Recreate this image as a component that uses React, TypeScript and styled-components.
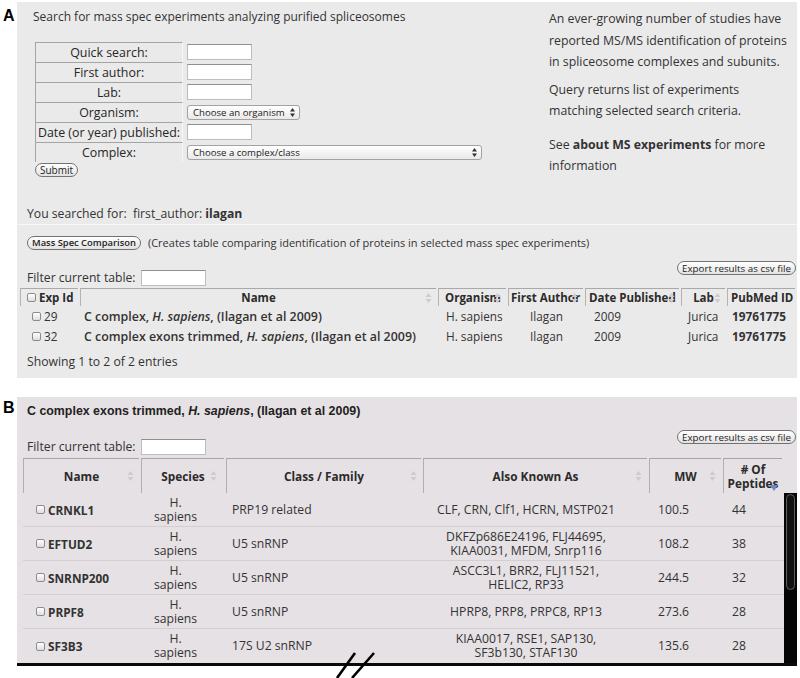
import React from 'react';
import styled, { createGlobalStyle } from 'styled-components';

const GlobalStyle = createGlobalStyle`
  html, body {
    margin: 0;
    padding: 0;
    background: #ffffff;
  }
  body {
    font-family: "Open Sans", "Noto Sans", "Liberation Sans", sans-serif;
    color: #333;
  }
`;

const Page = styled.div`
  position: relative;
  width: 800px;
  height: 678px;
  padding-top: 2px;
  box-sizing: border-box;
  overflow: hidden;
  background: #fff;
`;

const Figure = styled.section<{ $top?: number }>`
  display: grid;
  grid-template-columns: 17px 780px;
  margin-top: ${(p) => p.$top ?? 0}px;
`;

const Letter = styled.div<{ $pad: number }>`
  padding: ${(p) => p.$pad}px 0 0 3px;
  font: bold 16px/16px "Liberation Sans", Arial, sans-serif;
  color: #000;
`;

const Panel = styled.div<{ $bg: string; $pb?: number; $rule?: boolean }>`
  display: flex;
  flex-direction: column;
  background: ${(p) => p.$bg};
  padding-bottom: ${(p) => p.$pb ?? 0}px;
  border-bottom: ${(p) => (p.$rule ? '3px solid #0a0a0a' : 'none')};
`;

/* ---------- panel A: search form ---------- */

const TopRow = styled.div`
  display: grid;
  grid-template-columns: 532px 1fr;
  height: 175px;
`;

const SearchBlock = styled.div`
  padding: 7px 0 0 16px;
`;

const Heading = styled.h1`
  margin: 0;
  font-size: 12px;
  line-height: 16px;
  font-weight: normal;
  color: #333;
`;

const FieldGrid = styled.div`
  display: grid;
  grid-template-columns: 148px auto;
  grid-auto-rows: 20px;
  column-gap: 4px;
  justify-content: start;
  margin: 17px 0 0 2px;
`;

const FieldLabel = styled.div`
  display: flex;
  align-items: center;
  justify-content: center;
  border-top: 1px solid #a4a4a4;
  border-left: 1px solid #a4a4a4;
  border-right: 1px solid #f7f7f7;
  font-size: 12.4px;
  color: #262626;
  white-space: nowrap;
`;

const FieldCell = styled.div`
  display: flex;
  align-items: center;
`;

const TextInput = styled.input<{ $w?: number }>`
  width: ${(p) => p.$w ?? 65}px;
  height: 16px;
  box-sizing: border-box;
  margin: 0;
  padding: 0;
  background: #fff;
  border: 1px solid #bdbdbd;
  border-top-color: #8f8f8f;
`;

const Popup = styled.div<{ $w: number }>`
  width: ${(p) => p.$w}px;
  height: 15px;
  box-sizing: border-box;
  display: flex;
  align-items: center;
  justify-content: space-between;
  padding: 0 4px 0 5px;
  border: 1px solid #a2a2a2;
  border-radius: 3px;
  background: linear-gradient(#ffffff, #e9e9e9);
  font-size: 9.6px;
  color: #222;
  white-space: nowrap;
`;

const PillButton = styled.button<{ $fs: number; $fw?: number }>`
  height: 14px;
  padding: 0 4px;
  box-sizing: border-box;
  border: 1px solid #727272;
  border-radius: 7px;
  background: linear-gradient(#ffffff, #e2e2e2);
  font-family: inherit;
  font-size: ${(p) => p.$fs}px;
  font-weight: ${(p) => p.$fw ?? 400};
  line-height: 11px;
  color: #1c1c1c;
  white-space: nowrap;
`;

const SubmitButton = styled(PillButton)`
  display: block;
  margin: 1px 0 0 2px;
`;

const Info = styled.div`
  padding-top: 6px;
  font-size: 12.3px;
  line-height: 21.5px;
  color: #333;
`;

const InfoPara = styled.p<{ $mt?: number }>`
  margin: ${(p) => p.$mt ?? 0}px 0 0;
`;

const Strong = styled.b`
  font-weight: 700;
  color: #333;
`;

/* ---------- panel A: results ---------- */

const SearchSummary = styled.div`
  margin-top: 29px;
  padding-left: 10px;
  font-size: 12.2px;
  line-height: 16px;
`;

const Divider = styled.hr`
  margin: 2px 0 0;
  border: 0;
  height: 1px;
  background: #f8f8f8;
`;

const CompareBar = styled.div`
  display: flex;
  align-items: center;
  gap: 7px;
  height: 15px;
  margin-top: 10px;
  padding-left: 10px;
`;

const CompareNote = styled.span`
  font-size: 11px;
  color: #333;
`;

const FilterBar = styled.div`
  display: flex;
  justify-content: space-between;
  height: 25px;
  margin-top: 11px;
  padding: 0 1px 0 10px;
`;

const FilterGroup = styled.label`
  align-self: flex-end;
  display: flex;
  align-items: center;
  gap: 5px;
  font-size: 12.2px;
  line-height: 16px;
`;

const ExportButton = styled(PillButton)`
  align-self: flex-start;
`;

const Tick = styled.span`
  display: inline-block;
  flex: none;
  width: 9px;
  height: 9px;
  box-sizing: border-box;
  border: 1px solid #8c8c8c;
  border-radius: 2px;
  background: linear-gradient(#ffffff, #dedede);
`;

const expCols = '60px 358px 70px 77px 96px 46px 70px';

const ExpTable = styled.div`
  margin: 2px 0 0 3px;
`;

const ExpHead = styled.div`
  display: grid;
  grid-template-columns: ${expCols};
  height: 18px;
`;

const HeadCell = styled.div<{ $align?: string; $pl?: number; $fs?: number }>`
  position: relative;
  display: flex;
  align-items: center;
  justify-content: ${(p) => p.$align ?? 'center'};
  gap: 3px;
  margin-right: 2px;
  padding-left: ${(p) => p.$pl ?? 0}px;
  border-top: 1px solid #a9a9a9;
  border-left: 1px solid #b4b4b4;
  font-size: ${(p) => p.$fs ?? 11.5}px;
  font-weight: 700;
  color: #2b2b2b;
  white-space: nowrap;
`;

const SortMark = styled.svg<{ $right?: number }>`
  position: absolute;
  right: ${(p) => p.$right ?? 3}px;
  top: 50%;
  margin-top: -5px;
`;

const DescMark = styled.svg`
  position: absolute;
  right: 4px;
  bottom: 2px;
`;

const ExpRow = styled.div`
  display: grid;
  grid-template-columns: ${expCols};
  height: 20px;
  font-size: 11.8px;
`;

const ExpCell = styled.div<{ $align?: string; $pl?: number; $bold?: number; $fs?: number }>`
  display: flex;
  align-items: center;
  justify-content: ${(p) => p.$align ?? 'flex-start'};
  gap: 3px;
  padding-left: ${(p) => p.$pl ?? 0}px;
  font-size: ${(p) => p.$fs ?? 11.8}px;
  font-weight: ${(p) => p.$bold ?? 400};
  color: #333;
  white-space: nowrap;
`;

const Showing = styled.div`
  margin-top: 8px;
  padding-left: 10px;
  font-size: 12.2px;
  line-height: 16px;
`;

/* ---------- panel B ---------- */

const DetailTitle = styled.h2`
  margin: 0;
  padding: 6px 0 0 10px;
  font: bold 12.4px/16px "Liberation Sans", Arial, sans-serif;
  color: #222;
`;

const protCols = '118px 85px 197px 226px 74px 61px';

const ProtTable = styled.div`
  margin: 3px 0 0 6px;
`;

const ProtHead = styled.div`
  display: grid;
  grid-template-columns: ${protCols};
  width: 761px;
  height: 35px;
`;

const ProtHeadCell = styled(HeadCell)`
  border-top-color: #a8a4a6;
  border-left-color: #b3afb1;
  line-height: 14px;
  text-align: center;
`;

const ProtBody = styled.div`
  display: flex;
`;

const ProtRows = styled.div`
  width: 761px;
`;

const ProtRow = styled.div`
  display: grid;
  grid-template-columns: ${protCols};
  height: 34px;
  box-sizing: border-box;
  border-bottom: 1px solid #d3cecf;
  font-size: 12.2px;
  color: #333;

  &:last-child {
    border-bottom: 0;
  }
`;

const ProtName = styled.div`
  display: flex;
  align-items: center;
  gap: 3px;
  padding-left: 13px;
  font-size: 11.8px;
  font-weight: 700;
  white-space: nowrap;
`;

const ProtCell = styled.div<{ $center?: boolean; $pl?: number; $pr?: number }>`
  display: flex;
  flex-direction: column;
  align-items: ${(p) => (p.$center ? 'center' : 'flex-start')};
  justify-content: center;
  padding: 0 ${(p) => p.$pr ?? 0}px 0 ${(p) => p.$pl ?? 0}px;
  line-height: 14px;
  white-space: nowrap;
`;

const ScrollTrack = styled.div`
  flex: none;
  width: 13px;
  padding-top: 1px;
  box-sizing: border-box;
  background: #050505;
`;

const ScrollThumb = styled.div`
  height: 96px;
  margin: 0 2px;
  box-sizing: border-box;
  border: 1px solid #5e5e5e;
  border-radius: 5px;
  background: #111;
`;

const BreakMark = styled.svg`
  position: absolute;
  left: 334px;
  top: 650px;
`;

/* ---------- drawings ---------- */

const UpDown = () => (
  <svg width="5" height="9" viewBox="0 0 5 9">
    <path d="M2.5 0 L5 3.5 H0 Z M0 5.5 H5 L2.5 9 Z" fill="#333" />
  </svg>
);

const Sort = ({ right }: { right?: number }) => (
  <SortMark $right={right} width="7" height="10" viewBox="0 0 7 10">
    <path d="M3.5 0 L6.5 4 H0.5 Z M0.5 6 H6.5 L3.5 10 Z" fill="#cfcbcd" />
  </SortMark>
);

/* ---------- data ---------- */

type Field = { label: string; kind: 'text' | 'select'; w?: number; hint?: string };

const fields: Field[] = [
  { label: 'Quick search:', kind: 'text' },
  { label: 'First author:', kind: 'text' },
  { label: 'Lab:', kind: 'text' },
  { label: 'Organism:', kind: 'select', w: 113, hint: 'Choose an organism' },
  { label: 'Date (or year) published:', kind: 'text' },
  { label: 'Complex:', kind: 'select', w: 295, hint: 'Choose a complex/class' },
];

const experiments = [
  { id: '29', name: 'C complex, ', tail: ', (Ilagan et al 2009)' },
  { id: '32', name: 'C complex exons trimmed, ', tail: ', (Ilagan et al 2009)' },
];

const proteins = [
  { name: 'CRNKL1', cls: 'PRP19 related', aka: ['CLF, CRN, Clf1, HCRN, MSTP021'], mw: '100.5', pep: '44' },
  { name: 'EFTUD2', cls: 'U5 snRNP', aka: ['DKFZp686E24196, FLJ44695,', 'KIAA0031, MFDM, Snrp116'], mw: '108.2', pep: '38' },
  { name: 'SNRNP200', cls: 'U5 snRNP', aka: ['ASCC3L1, BRR2, FLJ11521,', 'HELIC2, RP33'], mw: '244.5', pep: '32' },
  { name: 'PRPF8', cls: 'U5 snRNP', aka: ['HPRP8, PRP8, PRPC8, RP13'], mw: '273.6', pep: '28' },
  { name: 'SF3B3', cls: '17S U2 snRNP', aka: ['KIAA0017, RSE1, SAP130,', 'SF3b130, STAF130'], mw: '135.6', pep: '28' },
];

export default function App() {
  return (
    <>
      <GlobalStyle />
      <Page>
        <Figure>
          <Letter $pad={6}>A</Letter>
          <Panel $bg="#ebeaea" $pb={8}>
            <TopRow>
              <SearchBlock>
                <Heading>Search for mass spec experiments analyzing purified spliceosomes</Heading>
                <FieldGrid>
                  {fields.map((f) => (
                    <React.Fragment key={f.label}>
                      <FieldLabel>{f.label}</FieldLabel>
                      <FieldCell>
                        {f.kind === 'text' ? (
                          <TextInput type="text" />
                        ) : (
                          <Popup $w={f.w ?? 100}>
                            <span>{f.hint}</span>
                            <UpDown />
                          </Popup>
                        )}
                      </FieldCell>
                    </React.Fragment>
                  ))}
                </FieldGrid>
                <SubmitButton $fs={10}>Submit</SubmitButton>
              </SearchBlock>
              <Info>
                <InfoPara>
                  An ever-growing number of studies have
                  <br />
                  reported MS/MS identification of proteins
                  <br />
                  in spliceosome complexes and subunits.
                </InfoPara>
                <InfoPara $mt={6}>
                  Query returns list of experiments
                  <br />
                  matching selected search criteria.
                </InfoPara>
                <InfoPara $mt={12}>
                  See <Strong>about MS experiments</Strong> for more
                  <br />
                  information
                </InfoPara>
              </Info>
            </TopRow>

            <SearchSummary>
              You searched for:&nbsp; first_author: <Strong>ilagan</Strong>
            </SearchSummary>
            <Divider />
            <CompareBar>
              <PillButton $fs={9.4} $fw={600}>Mass Spec Comparison</PillButton>
              <CompareNote>
                (Creates table comparing identification of proteins in selected mass spec experiments)
              </CompareNote>
            </CompareBar>
            <FilterBar>
              <FilterGroup>
                Filter current table: <TextInput type="text" />
              </FilterGroup>
              <ExportButton $fs={9.8}>Export results as csv file</ExportButton>
            </FilterBar>

            <ExpTable>
              <ExpHead>
                <HeadCell $align="flex-start" $pl={6}>
                  <Tick /> Exp Id
                </HeadCell>
                <HeadCell>
                  Name
                  <Sort right={4} />
                </HeadCell>
                <HeadCell $align="flex-start" $pl={6}>
                  Organism
                  <Sort right={5} />
                </HeadCell>
                <HeadCell $align="flex-start" $pl={2}>
                  First Author
                  <Sort right={5} />
                </HeadCell>
                <HeadCell $align="flex-start" $pl={3}>
                  Date Published
                  <Sort right={4} />
                </HeadCell>
                <HeadCell>
                  Lab
                  <Sort right={4} />
                </HeadCell>
                <HeadCell $align="flex-start" $pl={3}>
                  PubMed ID
                </HeadCell>
              </ExpHead>
              {experiments.map((e) => (
                <ExpRow key={e.id}>
                  <ExpCell $pl={12}>
                    <Tick /> {e.id}
                  </ExpCell>
                  <ExpCell $pl={4} $bold={600} $fs={12.4}>
                    <span>
                      {e.name}
                      <i>H. sapiens</i>
                      {e.tail}
                    </span>
                  </ExpCell>
                  <ExpCell $pl={8}>H. sapiens</ExpCell>
                  <ExpCell $align="center">Ilagan</ExpCell>
                  <ExpCell $pl={9}>2009</ExpCell>
                  <ExpCell $pl={7}>Jurica</ExpCell>
                  <ExpCell $pl={5} $bold={700}>
                    19761775
                  </ExpCell>
                </ExpRow>
              ))}
            </ExpTable>
            <Showing>Showing 1 to 2 of 2 entries</Showing>
          </Panel>
        </Figure>

        <Figure $top={19}>
          <Letter $pad={3}>B</Letter>
          <Panel $bg="#e6e1e4" $rule>
            <DetailTitle>
              C complex exons trimmed, <i>H. sapiens</i>, (Ilagan et al 2009)
            </DetailTitle>
            <FilterBar>
              <FilterGroup>
                Filter current table: <TextInput type="text" />
              </FilterGroup>
              <ExportButton $fs={9.8}>Export results as csv file</ExportButton>
            </FilterBar>

            <ProtTable>
              <ProtHead>
                <ProtHeadCell $fs={11.8}>
                  Name
                  <Sort right={5} />
                </ProtHeadCell>
                <ProtHeadCell $fs={11.8}>
                  Species
                  <Sort right={7} />
                </ProtHeadCell>
                <ProtHeadCell $fs={11.8}>
                  Class / Family
                  <Sort right={4} />
                </ProtHeadCell>
                <ProtHeadCell $fs={11.8}>
                  Also Known As
                  <Sort right={5} />
                </ProtHeadCell>
                <ProtHeadCell $fs={11.8}>
                  MW
                  <Sort right={5} />
                </ProtHeadCell>
                <ProtHeadCell $fs={11.8}>
                  # Of
                  <br />
                  Peptides
                  <DescMark width="8" height="6" viewBox="0 0 8 6">
                    <path d="M0 0 H8 L4 6 Z" fill="#6f86c6" />
                  </DescMark>
                </ProtHeadCell>
              </ProtHead>
              <ProtBody>
                <ProtRows>
                  {proteins.map((p) => (
                    <ProtRow key={p.name}>
                      <ProtName>
                        <Tick /> {p.name}
                      </ProtName>
                      <ProtCell $center $pr={16}>
                        <span>H.</span>
                        <span>sapiens</span>
                      </ProtCell>
                      <ProtCell $pl={6}>{p.cls}</ProtCell>
                      <ProtCell $center $pr={20}>
                        {p.aka.map((line) => (
                          <span key={line}>{line}</span>
                        ))}
                      </ProtCell>
                      <ProtCell $pl={9}>{p.mw}</ProtCell>
                      <ProtCell $pl={9}>{p.pep}</ProtCell>
                    </ProtRow>
                  ))}
                </ProtRows>
                <ScrollTrack>
                  <ScrollThumb />
                </ScrollTrack>
              </ProtBody>
            </ProtTable>
          </Panel>
        </Figure>

        <BreakMark width="44" height="28" viewBox="0 0 44 28">
          <line x1="3" y1="28" x2="21" y2="3" stroke="#000" strokeWidth="2.6" />
          <line x1="18" y1="28" x2="40" y2="3" stroke="#000" strokeWidth="2.6" />
        </BreakMark>
      </Page>
    </>
  );
}
